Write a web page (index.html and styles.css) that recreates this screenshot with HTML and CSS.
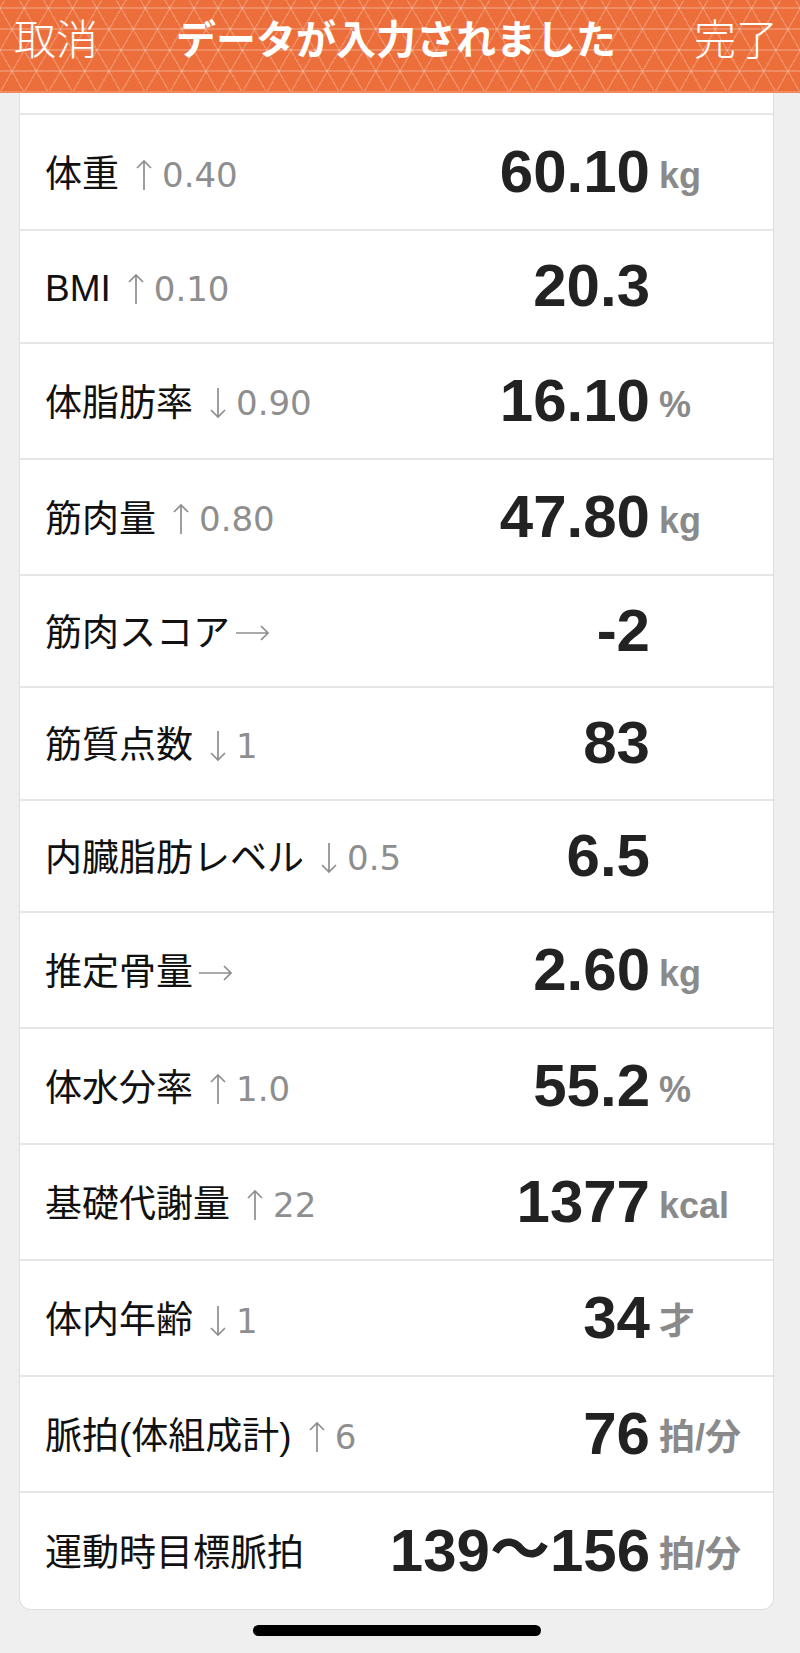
FILE: index.html
```html
<!DOCTYPE html>
<html lang="ja">
<head>
<meta charset="utf-8">
<title>データが入力されました</title>
<link rel="stylesheet" href="styles.css">
</head>
<body>
<header class="nav">
  <span class="nav-btn nav-left">取消</span>
  <h1 class="nav-title">データが入力されました</h1>
  <span class="nav-btn nav-right">完了</span>
</header>
<main class="sheet">
  <section class="card">
    <div class="row-partial"></div>

    <div class="row">
      <div class="label">体重<span class="delta"><svg class="arr-v" viewBox="0 0 20 32"><path d="M10 2V31M3 9L10 2L17 9"/></svg><span class="dnum">0.40</span></span></div>
      <div class="vals"><span class="value">60.10</span><span class="unit">kg</span></div>
    </div>

    <div class="row row-short">
      <div class="label">BMI<span class="delta"><svg class="arr-v" viewBox="0 0 20 32"><path d="M10 2V31M3 9L10 2L17 9"/></svg><span class="dnum">0.10</span></span></div>
      <div class="vals"><span class="value">20.3</span><span class="unit"></span></div>
    </div>

    <div class="row">
      <div class="label">体脂肪率<span class="delta"><svg class="arr-v" viewBox="0 0 20 32"><path d="M10 1V30M3 23L10 30L17 23"/></svg><span class="dnum">0.90</span></span></div>
      <div class="vals"><span class="value">16.10</span><span class="unit">%</span></div>
    </div>

    <div class="row">
      <div class="label">筋肉量<span class="delta"><svg class="arr-v" viewBox="0 0 20 32"><path d="M10 2V31M3 9L10 2L17 9"/></svg><span class="dnum">0.80</span></span></div>
      <div class="vals"><span class="value">47.80</span><span class="unit">kg</span></div>
    </div>

    <div class="row row-short">
      <div class="label">筋肉スコア<span class="delta delta-flat"><svg class="arr-h" viewBox="0 0 34 16"><path d="M1 8H33M26 1L33 8L26 15"/></svg></span></div>
      <div class="vals"><span class="value">-2</span><span class="unit"></span></div>
    </div>

    <div class="row row-short">
      <div class="label">筋質点数<span class="delta"><svg class="arr-v" viewBox="0 0 20 32"><path d="M10 1V30M3 23L10 30L17 23"/></svg><span class="dnum">1</span></span></div>
      <div class="vals"><span class="value">83</span><span class="unit"></span></div>
    </div>

    <div class="row row-short">
      <div class="label">内臓脂肪レベル<span class="delta"><svg class="arr-v" viewBox="0 0 20 32"><path d="M10 1V30M3 23L10 30L17 23"/></svg><span class="dnum">0.5</span></span></div>
      <div class="vals"><span class="value">6.5</span><span class="unit"></span></div>
    </div>

    <div class="row">
      <div class="label">推定骨量<span class="delta delta-flat"><svg class="arr-h" viewBox="0 0 34 16"><path d="M1 8H33M26 1L33 8L26 15"/></svg></span></div>
      <div class="vals"><span class="value">2.60</span><span class="unit">kg</span></div>
    </div>

    <div class="row">
      <div class="label">体水分率<span class="delta"><svg class="arr-v" viewBox="0 0 20 32"><path d="M10 2V31M3 9L10 2L17 9"/></svg><span class="dnum">1.0</span></span></div>
      <div class="vals"><span class="value">55.2</span><span class="unit">%</span></div>
    </div>

    <div class="row">
      <div class="label">基礎代謝量<span class="delta"><svg class="arr-v" viewBox="0 0 20 32"><path d="M10 2V31M3 9L10 2L17 9"/></svg><span class="dnum">22</span></span></div>
      <div class="vals"><span class="value">1377</span><span class="unit">kcal</span></div>
    </div>

    <div class="row">
      <div class="label">体内年齢<span class="delta"><svg class="arr-v" viewBox="0 0 20 32"><path d="M10 1V30M3 23L10 30L17 23"/></svg><span class="dnum">1</span></span></div>
      <div class="vals"><span class="value">34</span><span class="unit">才</span></div>
    </div>

    <div class="row">
      <div class="label">脈拍(体組成計)<span class="delta"><svg class="arr-v" viewBox="0 0 20 32"><path d="M10 2V31M3 9L10 2L17 9"/></svg><span class="dnum">6</span></span></div>
      <div class="vals"><span class="value">76</span><span class="unit">拍/分</span></div>
    </div>

    <div class="row row-last">
      <div class="label">運動時目標脈拍</div>
      <div class="vals"><span class="value">139〜156</span><span class="unit">拍/分</span></div>
    </div>
  </section>
  <div class="home-indicator"></div>
</main>
</body>
</html>
```

FILE: styles.css
```css
* { box-sizing: border-box; }

html, body {
  margin: 0;
  padding: 0;
}

body {
  width: 800px;
  height: 1653px;
  overflow: hidden;
  background: #efefef;
  font-family: "Liberation Sans", "Noto Sans CJK JP", sans-serif;
  color: #111;
}

/* ---------- navigation bar ---------- */
.nav {
  height: 93px;
  padding: 0 22px 17px 14px;
  display: grid;
  grid-template-columns: 1fr auto 1fr;
  align-items: center;
  color: #fff;
  background-color: #ec6f3b;
  background-image:
    repeating-linear-gradient(0deg, rgba(255,255,255,0) 0 19.5px, rgba(255,255,255,0.2) 19.5px 21px),
    repeating-linear-gradient(60deg, rgba(255,255,255,0) 0 19.5px, rgba(255,255,255,0.2) 19.5px 21px),
    repeating-linear-gradient(-60deg, rgba(255,255,255,0) 0 19.5px, rgba(255,255,255,0.2) 19.5px 21px);
  border-bottom: 2px solid #f08a5c;
}

.nav-btn {
  font-family: "Noto Sans CJK JP", sans-serif;
  font-size: 42px;
  font-weight: 300;
  line-height: 1;
}

.nav-right { justify-self: end; }

.nav-title {
  margin: 0;
  font-family: "Noto Sans CJK JP", sans-serif;
  font-size: 40px;
  font-weight: 700;
  line-height: 1;
  white-space: nowrap;
}

/* ---------- sheet / card ---------- */
.sheet {
  padding: 0 26px 0 19px;
}

.card {
  background: #fff;
  border: 1px solid #dedede;
  border-top: 0;
  border-radius: 0 0 12px 12px;
}

.row-partial {
  height: 22px;
  border-bottom: 2px solid #e6e6e6;
}

.row {
  height: 116px;
  padding-left: 25px;
  display: flex;
  align-items: center;
  border-bottom: 2px solid #e6e6e6;
}

.row-short {
  height: 112.5px;
}

.row-last {
  border-bottom: 0;
}

.label {
  flex: 1;
  display: flex;
  align-items: center;
  padding-top: 5px;
  font-size: 37px;
  line-height: 1;
  color: #111;
  white-space: nowrap;
}

.delta {
  display: inline-flex;
  align-items: center;
  margin-left: 15px;
  color: #8e8e8e;
}

.delta-flat {
  margin-left: 5px;
}

.arr-v {
  width: 20px;
  height: 32px;
  fill: none;
  stroke: #8e8e8e;
  stroke-width: 1.7;
}

.arr-h {
  width: 34px;
  height: 16px;
  fill: none;
  stroke: #8e8e8e;
  stroke-width: 1.7;
}

.dnum {
  margin-left: 8px;
  font-family: "DejaVu Sans", sans-serif;
  font-size: 34px;
  line-height: 1;
  color: #8e8e8e;
}

.vals {
  white-space: nowrap;
  line-height: 1;
}

.value {
  display: inline-block;
  font-family: "Liberation Sans", "Noto Sans CJK JP", sans-serif;
  font-weight: 700;
  font-size: 60px;
  color: #222;
}

.unit {
  display: inline-block;
  width: 123px;
  padding-left: 9px;
  font-family: "Liberation Sans", "Noto Sans CJK JP", sans-serif;
  font-weight: 700;
  font-size: 36px;
  color: #8a8a8a;
  vertical-align: 4px;
}

/* ---------- home indicator ---------- */
.home-indicator {
  width: 288px;
  height: 11px;
  margin: 15px auto 0;
  border-radius: 6px;
  background: #000;
}
```
